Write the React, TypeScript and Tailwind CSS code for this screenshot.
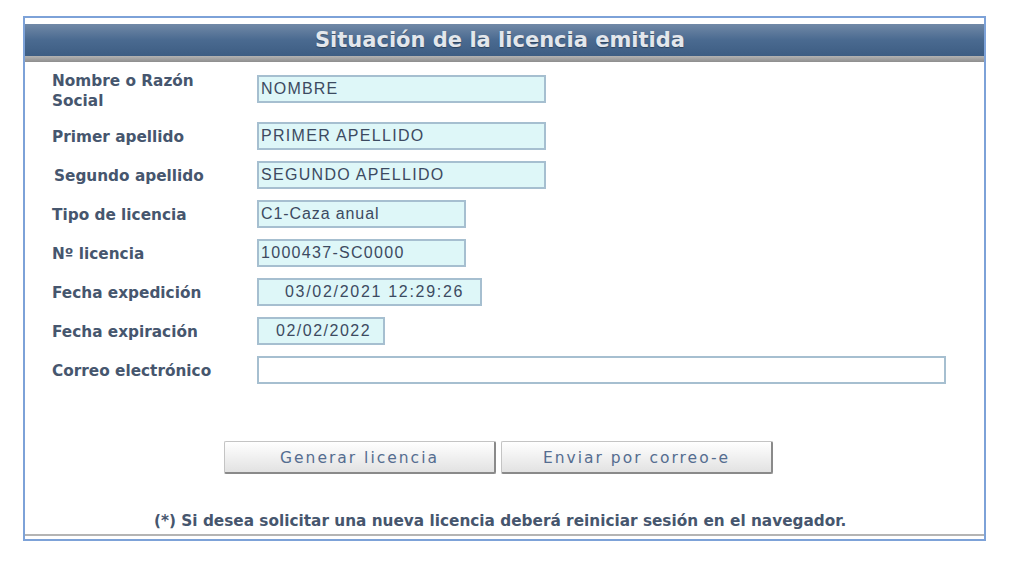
import React from "react";

const labelCls =
  "text-[15.3px] font-bold leading-[20px] text-[#46566e] [font-family:'DejaVu_Sans',sans-serif]";
const boxCls =
  "h-[28px] border-2 border-[#a6bfd0] bg-[#def7f8] flex items-center text-[16px] text-[#3c4a61] [font-family:'Liberation_Sans',Arial,sans-serif] whitespace-nowrap";

function Row({
  label,
  children,
  first,
  indent,
}: {
  label: React.ReactNode;
  children: React.ReactNode;
  first?: boolean;
  indent?: boolean;
}) {
  return (
    <div className={`flex items-center ${first ? "h-[40px]" : "h-[39px]"}`}>
      <div
        className={`w-[205px] whitespace-nowrap ${first ? "pt-[4px]" : "pt-[2px]"} ${indent ? "pl-[2px]" : ""} ${labelCls}`}
      >
        {label}
      </div>
      {children}
    </div>
  );
}

const btnCls =
  "w-[272px] h-[33px] pt-[3px] rounded-[2px] border border-[#c4c4c4] border-r-[#8a8a8a] border-b-[#8a8a8a] border-r-2 border-b-2 bg-gradient-to-b from-white to-[#e2e2e2] text-[15.5px] tracking-[2px] text-[#556d90] [font-family:'DejaVu_Sans',sans-serif]";

export default function App() {
  return (
    <div className="w-[1024px] h-[564px] bg-white pt-[16px] pl-[23px]">
      <div className="w-[963px] h-[525px] border-2 border-[#7da2d8] bg-white flex flex-col">
        <div className="h-[6px]" />
        <div className="h-[32px] bg-gradient-to-b from-[#7189a7] via-[#4a6a90] to-[#3d5d83] flex items-center justify-center pr-[9px]">
          <span className="text-[21px] font-bold text-[#e3e7ec] [font-family:'DejaVu_Sans',sans-serif] [text-shadow:0_1px_1px_rgba(0,0,0,0.35)] leading-none">
            Situación de la licencia emitida
          </span>
        </div>
        <div className="h-[6px] bg-gradient-to-b from-[#b3b3b3] to-[#8e8e8e]" />

        <div className="pl-[27px] mt-[7px] flex flex-col">
          <Row label={<>Nombre o Razón<br />Social</>} first>
            <div className={`${boxCls} w-[289px] pl-[2px] tracking-[1.2px]`}>NOMBRE</div>
          </Row>
          <div className="h-[7px]" />
          <Row label="Primer apellido">
            <div className={`${boxCls} w-[289px] pl-[2px] tracking-[1.3px]`}>PRIMER APELLIDO</div>
          </Row>
          <Row label="Segundo apellido" indent>
            <div className={`${boxCls} w-[289px] pl-[2px] tracking-[1.3px]`}>SEGUNDO APELLIDO</div>
          </Row>
          <Row label="Tipo de licencia">
            <div className={`${boxCls} w-[209px] pl-[2px] tracking-[0.9px]`}>C1-Caza anual</div>
          </Row>
          <Row label="Nº licencia">
            <div className={`${boxCls} w-[209px] pl-[2px] tracking-[1.3px]`}>1000437-SC0000</div>
          </Row>
          <Row label="Fecha expedición">
            <div className={`${boxCls} w-[225px] pl-[26px] tracking-[1.7px]`}>03/02/2021 12:29:26</div>
          </Row>
          <Row label="Fecha expiración">
            <div className={`${boxCls} w-[128px] pl-[17px] tracking-[1.5px]`}>02/02/2022</div>
          </Row>
          <Row label="Correo electrónico">
            <div className={`${boxCls} w-[689px] bg-white`} />
          </Row>
        </div>

        <div className="mt-[52px] pl-[199px] flex gap-[5px]">
          <button className={btnCls}>Generar licencia</button>
          <button className={btnCls}>Enviar por correo-e</button>
        </div>

        <div className="mt-[37px] pl-[129px] text-[15.3px] font-bold leading-[20px] text-[#46566e] [font-family:'DejaVu_Sans',sans-serif] whitespace-nowrap">
          (*) Si desea solicitar una nueva licencia deberá reiniciar sesión en el navegador.
        </div>
        <div className="mt-auto mb-[3px] h-[2px] bg-[#b4b4b4]" />
      </div>
    </div>
  );
}
